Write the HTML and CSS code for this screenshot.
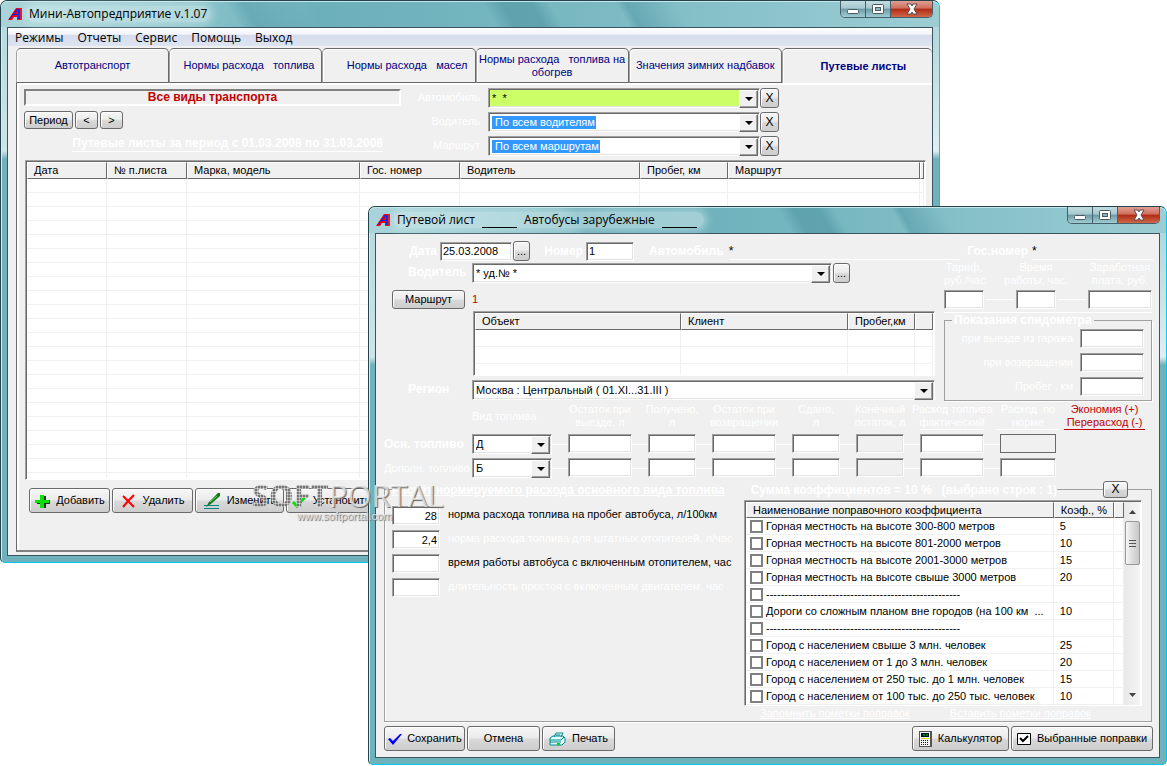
FILE: index.html
```html
<!DOCTYPE html>
<html lang="ru">
<head>
  <meta charset="UTF-8" />
  <meta name="viewport" content="width=device-width, initial-scale=1.0"/>
  <title>Мини-Автопредприятие v.1.07</title>
  <link rel="stylesheet" href="styles.css">
</head>
<body>
  <div class="desktop">

    <section class="window window-main">
      <header class="titlebar">
        <svg class="app-icon" viewBox="0 0 14 12" width="14" height="12"><path d="M0 12 8 0h6v12H9V9H6l-2 3z" fill="#f00010"/><path d="M1 11 9 1h3v10h-2V7H5l-3 4zM6 6h4V2z" fill="#0a20e8"/></svg>
        <h1>Мини-Автопредприятие v.1.07</h1>
        <div class="controls">
          <button class="ctl" aria-label="Свернуть"><svg viewBox="0 0 14 12" width="14" height="12"><rect x="1.500" y="6.500" width="11" height="4" rx="1" fill="#fff" stroke="#4d5a62"/></svg></button>
          <button class="ctl" aria-label="Развернуть"><svg viewBox="0 0 14 12" width="14" height="12"><rect x="1.500" y="1.500" width="11" height="9" rx="1" fill="#fff" stroke="#4d5a62"/><rect x="4.500" y="4.500" width="5" height="3" fill="#8fb6c0" stroke="#4d5a62"/></svg></button>
          <button class="ctl ctl-close" aria-label="Закрыть"><svg viewBox="0 0 14 12" width="14" height="12"><path d="M2 1h4l1 2 1-2h4L9 6l3 5H8L7 9l-1 2H2l3-5z" fill="#fff" stroke="#5a4a50"/></svg></button>
        </div>
      </header>

      <div class="client">
        <nav class="menu">
          <a href="#">Режимы</a>
          <a href="#">Отчеты</a>
          <a href="#">Сервис</a>
          <a href="#">Помощь</a>
          <a href="#">Выход</a>
        </nav>

        <div class="tabs">
          <button class="tab">Автотранспорт</button>
          <button class="tab tab-right">Нормы расхода &nbsp; топлива</button>
          <button class="tab tab-right">Нормы расхода &nbsp; масел</button>
          <button class="tab tab-tight">Нормы расхода &nbsp; топлива на<br>обогрев</button>
          <button class="tab">Значения зимних надбавок</button>
          <button class="tab tab-active">Путевые листы</button>
        </div>

        <div class="page">
          <div class="top">
            <div class="period">
              <div class="kind">Все виды транспорта</div>
              <div class="period-buttons">
                <button class="btn btn-period">Период</button>
                <button class="btn btn-step">&lt;</button>
                <button class="btn btn-step">&gt;</button>
              </div>
              <h2>Путевые листы за период с 01.03.2008 по 31.03.2008</h2>
            </div>
            <div class="filters">
              <label for="f-car">Автомобиль</label>
              <span class="combo combo-green"><select id="f-car"><option>* &nbsp;*</option></select></span>
              <button class="btn btn-x">X</button>
              <label for="f-driver">Водитель</label>
              <span class="combo combo-marked"><select id="f-driver"><option>&nbsp;По всем водителям</option></select></span>
              <button class="btn btn-x">X</button>
              <label for="f-route">Маршрут</label>
              <span class="combo combo-marked"><select id="f-route"><option>&nbsp;По всем маршрутам</option></select></span>
              <button class="btn btn-x">X</button>
            </div>
          </div>

          <div class="grid-box">
            <table class="list list-main">
              <colgroup><col class="c80"><col class="c80"><col class="c173"><col class="c100"><col class="c180"><col class="c88"><col><col class="c4"></colgroup>
              <thead>
                <tr><th>Дата</th><th>№ п.листа</th><th>Марка, модель</th><th>Гос. номер</th><th>Водитель</th><th>Пробег, км</th><th>Маршрут</th><th></th></tr>
              </thead>
              <tbody>
                <tr><td></td><td></td><td></td><td></td><td></td><td></td><td></td><td></td></tr>
              </tbody>
            </table>
          </div>

          <div class="actions">
            <button class="btn btn-big"><svg viewBox="0 0 16 16" width="16" height="16"><path d="M7 3h5v4h4v4h-4v4H7v-4H3V7h4z" fill="#1c3c1c"/><path d="M6 2h4v5h5v3h-5v5H6v-5H1V7h5z" fill="#0be00b"/></svg>Добавить</button>
            <button class="btn btn-big"><svg viewBox="0 0 16 16" width="16" height="16"><path d="M2 3l11 11M13 2 8 7l-6 7" fill="none" stroke="#f00" stroke-width="2"/></svg>Удалить</button>
            <button class="btn btn-big btn-edit"><svg viewBox="0 0 18 16" width="18" height="16"><path d="M1 12.500h15M1 15.500h15" stroke="#088"/><path d="M3 14l3-5 9-9h2v3l-8 7-4 3z" fill="#0a7a14"/><path d="M7 9l7-6" stroke="#8c8" fill="none"/></svg>Изменить</button>
            <button class="btn btn-big btn-edit"><svg viewBox="0 0 16 16" width="16" height="16"><path d="M2 9l4 4 8-9" fill="none" stroke="#0be00b" stroke-width="3"/></svg>Установить</button>
          </div>
        </div>
      </div>
    </section>

    <section class="window window-sheet">
      <header class="titlebar">
        <svg class="app-icon" viewBox="0 0 14 12" width="14" height="12"><path d="M0 12 8 0h6v12H9V9H6l-2 3z" fill="#f00010"/><path d="M1 11 9 1h3v10h-2V7H5l-3 4zM6 6h4V2z" fill="#0a20e8"/></svg>
        <h1>Путевой лист <span class="blank"></span> Автобусы зарубежные <span class="blank"></span></h1>
        <div class="controls">
          <button class="ctl" aria-label="Свернуть"><svg viewBox="0 0 14 12" width="14" height="12"><rect x="1.500" y="6.500" width="11" height="4" rx="1" fill="#fff" stroke="#4d5a62"/></svg></button>
          <button class="ctl" aria-label="Развернуть"><svg viewBox="0 0 14 12" width="14" height="12"><rect x="1.500" y="1.500" width="11" height="9" rx="1" fill="#fff" stroke="#4d5a62"/><rect x="4.500" y="4.500" width="5" height="3" fill="#8fb6c0" stroke="#4d5a62"/></svg></button>
          <button class="ctl ctl-close" aria-label="Закрыть"><svg viewBox="0 0 14 12" width="14" height="12"><path d="M2 1h4l1 2 1-2h4L9 6l3 5H8L7 9l-1 2H2l3-5z" fill="#fff" stroke="#5a4a50"/></svg></button>
        </div>
      </header>

      <div class="client sheet">
        <div class="line line-head">
          <label class="bold side" for="date">Дата</label>
          <input class="field w-date" id="date" type="text" value="25.03.2008">
          <button class="btn btn-dots">...</button>
          <label class="bold side-num" for="num">Номер</label>
          <input class="field w-48" id="num" type="text" value="1">
          <span class="bold car-label">Автомобиль</span>
          <span class="under">*</span>
          <span class="bold">Гос.номер</span>
          <span class="under under-short">*</span>
        </div>

        <div class="upper">
          <div class="upper-left">
            <label class="bold" for="driver">Водитель</label>
            <div class="line">
              <span class="combo combo-driver"><select id="driver"><option>* уд.№ *</option></select></span>
              <button class="btn btn-dots">...</button>
            </div>
            <button class="btn btn-route">Маршрут</button>
            <span class="route-no">1</span>
            <div class="grid-box route-box">
              <table class="list list-route">
                <colgroup><col><col class="c167"><col class="c67"><col class="c18"></colgroup>
                <thead>
                  <tr><th>Объект</th><th>Клиент</th><th>Пробег,км</th><th></th></tr>
                </thead>
                <tbody>
                  <tr><td></td><td></td><td></td><td></td></tr>
                </tbody>
              </table>
            </div>
            <label class="bold" for="region">Регион</label>
            <span class="combo"><select id="region"><option>Москва : Центральный ( 01.XI...31.III )</option></select></span>
          </div>

          <div class="upper-right">
            <div class="pay">
              <label for="rate">Тариф,<br>руб./час</label>
              <label for="hours">Время<br>работы, час.</label>
              <label for="salary">Заработная<br>плата, руб.</label>
            </div>
            <div class="pay-fields">
              <input class="field w-40" id="rate" type="text"><i class="dash"></i>
              <input class="field w-40" id="hours" type="text"><i class="dash"></i>
              <input class="field w-64" id="salary" type="text">
            </div>
            <fieldset class="odometer">
              <legend>Показания спидометра</legend>
              <label for="odo-out">при выезде из гаража</label><input class="field" id="odo-out" type="text">
              <label for="odo-in">при возвращении</label><input class="field" id="odo-in" type="text">
              <label for="odo-run">Пробег , км</label><input class="field" id="odo-run" type="text">
            </fieldset>
          </div>
        </div>

        <div class="fuel fuel-head">
          <span></span>
          <span class="fuel-kind">Вид топлива</span>
          <span>Остаток при<br>выезде, л</span>
          <span>Получено,<br>л</span>
          <span>Остаток при<br>возвращении</span>
          <span>Сдано,<br>л</span>
          <span>Конечный<br>остаток, л</span>
          <span class="ruled">Расход топлива<br>фактический</span>
          <span class="ruled">Расход &nbsp;по<br>норме</span>
          <span class="economy">Экономия (+)<br>Перерасход (-)</span>
        </div>
        <div class="fuel fuel-row">
          <label class="bold" for="fuel1">Осн. топливо</label>
          <span class="combo"><select id="fuel1"><option>Д</option></select></span>
          <input class="field" type="text" aria-label="Остаток при выезде">
          <input class="field" type="text" aria-label="Получено">
          <input class="field" type="text" aria-label="Остаток при возвращении">
          <input class="field" type="text" aria-label="Сдано">
          <input class="field field-off" type="text" aria-label="Конечный остаток">
          <input class="field" type="text" aria-label="Расход фактический">
          <input class="field field-norm" type="text" aria-label="Расход по норме">
        </div>
        <div class="fuel fuel-row">
          <label for="fuel2">Дополн. топливо</label>
          <span class="combo"><select id="fuel2"><option>Б</option></select></span>
          <input class="field" type="text" aria-label="Остаток при выезде">
          <input class="field" type="text" aria-label="Получено">
          <input class="field" type="text" aria-label="Остаток при возвращении">
          <input class="field" type="text" aria-label="Сдано">
          <input class="field field-off" type="text" aria-label="Конечный остаток">
          <input class="field" type="text" aria-label="Расход фактический">
          <input class="field" type="text" aria-label="Расход по норме">
        </div>

        <div class="calc-head">
          <i class="rule rule-start"></i>
          <h3 class="calc-title">Расчёт нормируемого расхода основного вида топлива</h3>
          <h3 class="calc-sum">Сумма коэффициентов = 10 % &nbsp; (выбрано строк : 1)</h3>
          <i class="rule"></i>
          <button class="btn btn-reset">X</button>
          <i class="rule rule-end"></i>
        </div>
        <div class="calc">
          <div class="norms">
            <input class="field" id="n1" type="text" value="28"><label class="dark" for="n1">норма расхода топлива на пробег автобуса, л/100км</label>
            <input class="field" id="n2" type="text" value="2,4"><label for="n2">норма расхода топлива для штатных отопителей, л/час</label>
            <input class="field" id="n3" type="text"><label class="dark" for="n3">время работы автобуса с включенным отопителем, час</label>
            <input class="field" id="n4" type="text"><label for="n4">длительность простоя с включенным двигателем, час</label>
          </div>

          <div class="factors">
            <div class="grid-box factor-box">
              <table class="list list-factors">
                <colgroup><col><col class="c60"><col class="c10"></colgroup>
                <thead>
                  <tr><th>Наименование поправочного коэффициента</th><th>Коэф., %</th><th></th></tr>
                </thead>
                <tbody>
                  <tr><td><label><input type="checkbox">Горная местность на высоте 300-800 метров</label></td><td>5</td><td></td></tr>
                  <tr><td><label><input type="checkbox">Горная местность на высоте 801-2000 метров</label></td><td>10</td><td></td></tr>
                  <tr><td><label><input type="checkbox">Горная местность на высоте 2001-3000 метров</label></td><td>15</td><td></td></tr>
                  <tr><td><label><input type="checkbox">Горная местность на высоте свыше 3000 метров</label></td><td>20</td><td></td></tr>
                  <tr><td><label><input type="checkbox">-----------------------------------------------------</label></td><td></td><td></td></tr>
                  <tr><td><label><input type="checkbox">Дороги со сложным планом вне городов (на 100 км &nbsp;...</label></td><td>10</td><td></td></tr>
                  <tr><td><label><input type="checkbox">-----------------------------------------------------</label></td><td></td><td></td></tr>
                  <tr><td><label><input type="checkbox">Город с населением свыше 3 млн. человек</label></td><td>25</td><td></td></tr>
                  <tr><td><label><input type="checkbox">Город с населением от 1 до 3 млн. человек</label></td><td>20</td><td></td></tr>
                  <tr><td><label><input type="checkbox">Город с населением от 250 тыс. до 1 млн. человек</label></td><td>15</td><td></td></tr>
                  <tr><td><label><input type="checkbox">Город с населением от 100 тыс. до 250 тыс. человек</label></td><td>10</td><td></td></tr>
                </tbody>
              </table>
              <div class="scroll">
                <svg viewBox="0 0 7 4" width="7" height="4"><path d="M0 4 3.500 0 7 4z" fill="#444"/></svg>
                <div class="thumb"><i></i><i></i><i></i></div>
                <svg viewBox="0 0 7 4" width="7" height="4"><path d="M0 0h7L3.500 4z" fill="#444"/></svg>
              </div>
            </div>
            <div class="factor-links">
              <a href="#">Запомнить пометки поправок</a>
              <a href="#">Вставить пометки поправок</a>
            </div>
          </div>
        </div>

        <footer class="sheet-actions">
          <button class="btn btn-big btn-save"><svg viewBox="0 0 16 16" width="16" height="16"><path d="M1 8l2-1 3 3 7-7h2L6 14z" fill="#00f"/></svg>Сохранить</button>
          <button class="btn btn-mid">Отмена</button>
          <button class="btn btn-mid"><svg viewBox="0 0 17 14" width="17" height="14"><path d="M5 5l2-4h7l-2 4M1 6l3-2h10l2 2v4l-3 3H1z" fill="#dff" stroke="#088"/><path d="M1 8h11l3-3M1 10h11M7 3h4" fill="none" stroke="#088"/><path d="M8 12h3" stroke="#0d0" stroke-width="2"/></svg>Печать</button>
          <span class="spacer"></span>
          <button class="btn btn-calc"><svg viewBox="0 0 13 16" width="13" height="16"><path d="M0 0h13v16H0z" fill="#555"/><path d="M1 1h10v14H1z" fill="#f4f4f4"/><path d="M2 2h8v4H2z" fill="#012"/><path d="M4 4h2M7 4h2" stroke="#0e0"/><path d="M2 7.500h8" stroke="#dd0"/><path d="M2 9.500h8M2 11.500h8M2 13.500h8" stroke="#00c" stroke-dasharray="1 1"/></svg>Калькулятор</button>
          <button class="btn btn-chosen"><svg viewBox="0 0 14 12" width="14" height="12"><path d="M.5.5h13v11H.5z" fill="#fff" stroke="#000"/><path d="M3 5l3 3 5-5" fill="none" stroke="#000" stroke-width="2"/></svg>Выбранные поправки</button>
        </footer>
      </div>
    </section>

    <div class="watermark">
      <div class="brand"><span class="brand-dots">SOFT</span>PORTAL</div>
      <div class="site">www.softportal.com</div>
    </div>
  </div>
</body>
</html>
```

FILE: styles.css
```css
* {
  box-sizing: border-box;
}

body {
  margin: 0;
  background: #fff;
  color: #000;
  font: 11px/13px "Liberation Sans", Arial, sans-serif;
}

button, input, select {
  font: inherit;
  color: inherit;
  margin: 0;
}

h1, h2, h3 {
  margin: 0;
  font-size: 12px;
}

.desktop {
  position: relative;
  min-height: 100vh;
  overflow: hidden;
}

/* windows */

.window {
  position: absolute;
  padding: 0 6px 6px;
  border: 1px solid #23424c;
  border-right-color: #00c8f0;
  border-bottom-color: #00c8f0;
  border-radius: 7px 7px 5px 5px;
  background:
    linear-gradient(#b4d8dd, #cde4e8 150px, #70b2bc 158px) left / 6px 100% no-repeat,
    linear-gradient(#a8d2d8, #e0eef2 150px, #70b2bc 158px) right / 6px 100% no-repeat,
    #70b2bc;
  box-shadow: inset 1px 1px #d5ecef;
}

.window-main {
  left: 0;
  top: 0;
  right: 227px;
}

.window-sheet {
  left: 368px;
  top: 206px;
  right: 0;
}

.titlebar {
  display: flex;
  align-items: center;
  height: 26px;
  margin: 0 -6px;
  padding: 0 6px 0 7px;
  border-radius: 6px 6px 0 0;
  background:
    linear-gradient(60deg, transparent 25%, rgba(85, 155, 168, 0.5) 27%, transparent 33%, transparent 52%, rgba(80, 150, 163, 0.6) 54%, rgba(80, 150, 163, 0.6) 57%, transparent 59%, transparent 66%, rgba(85, 155, 168, 0.6) 67%, transparent 72%),
    linear-gradient(90deg, #aad4d9, #8fc6cd 18%, #6cb0bb 34%, #78b8c1 60%, #9ccdd3);
  box-shadow: inset 0 1px #c9e6ea;
}

.titlebar h1 {
  margin-left: 4px;
  padding: 0 3px;
  font: 12px/16px "Open Sans", sans-serif;
  border-radius: 8px;
  background: rgba(225, 242, 245, 0.45);
  box-shadow: 0 0 8px 3px rgba(225, 242, 245, 0.45);
}

.blank {
  display: inline-block;
  width: 35px;
  height: 13px;
  margin: 0 4px;
  vertical-align: bottom;
  border-bottom: 1px solid #000;
}

.controls {
  display: flex;
  align-self: flex-start;
  margin-left: auto;
  border: 1px solid #45606a;
  border-top: 0;
  border-radius: 0 0 5px 5px;
  overflow: hidden;
}

.ctl {
  display: flex;
  align-items: center;
  justify-content: center;
  width: 25px;
  height: 16px;
  padding: 0;
  border: 0;
  border-right: 1px solid #45606a;
  background: linear-gradient(#c3dde1, #a5c8ce 45%, #6d9aa5 50%, #9fcdd3);
}

.ctl-close {
  width: 41px;
  border-right: 0;
  background: linear-gradient(#dfa093, #cf6e5c 45%, #b02a14 50%, #cf6848);
}

.client {
  border: 1px solid #3a5560;
  background: #f0f0f0;
}

/* main window */

.menu {
  display: flex;
  gap: 14px;
  height: 19px;
  padding: 1px 7px 0;
  border-bottom: 1px solid #f0f0f0;
  background: linear-gradient(#fff, #f1f3f9 35%, #d6dcec 40%, #dde4f1);
}

.menu a {
  color: #000;
  font: 12px/18px "Open Sans", sans-serif;
  text-decoration: none;
}

.tabs {
  display: grid;
  grid-template-columns: repeat(5, 153fr) 150fr;
  height: 36px;
  margin-left: 8px;
  padding-top: 1px;
}

.tab {
  padding: 0 4px;
  border: 1px solid #696969;
  border-left-color: #a0a0a0;
  border-radius: 5px 5px 0 0;
  background: #f0f0f0;
  box-shadow: inset 1px 1px #fff;
  color: #000080;
  text-align: center;
  white-space: nowrap;
}

.tab-right {
  padding-right: 7px;
  text-align: right;
}

.tab-tight {
  padding: 0;
}

.tab-active {
  padding-left: 16px;
  border-right: 0;
  border-bottom: 0;
  font-weight: bold;
}

.page {
  margin: 0 0 3px 8px;
  padding: 4px 6px 37px 7px;
  border-left: 1px solid #696969;
  border-bottom: 2px solid #808080;
  box-shadow: inset 2px 2px #fff;
}

.top {
  display: flex;
  gap: 7px;
  padding-top: 1px;
}

.period {
  width: 377px;
}

.kind {
  margin: 1px 0 5px;
  border: 2px solid;
  border-color: #808080 #fff #fff #808080;
  color: #c00000;
  font-weight: bold;
  font-size: 12px;
  text-align: center;
}

.period-buttons {
  display: flex;
  gap: 2px;
}

.period h2 {
  width: fit-content;
  margin: 6px 18px 0 auto;
  border-bottom: 1px solid #fff;
  color: #fff;
  line-height: 16px;
}

.filters {
  display: grid;
  grid-template-columns: 80px 272px 19px;
  gap: 4px 0;
}

.filters label {
  padding: 3px 8px 0 0;
  color: #fff;
  text-align: right;
}

.btn {
  display: flex;
  align-items: center;
  justify-content: center;
  gap: 6px;
  padding: 0;
  border: 1px solid #6a6a6a;
  border-radius: 3px;
  background: linear-gradient(#f6f6f6, #ececec 45%, #d8d8d8 55%, #cdcdcd);
  box-shadow: inset 1px 1px #fff;
  white-space: nowrap;
}

.btn-period {
  width: 49px;
  height: 18px;
}

.btn-step {
  width: 23px;
  height: 18px;
}

.btn-x {
  font-size: 12px;
}

.combo {
  display: flex;
  align-items: center;
  height: 20px;
  padding: 2px 20px 2px 3px;
  position: relative;
  border: 1px solid;
  border-color: #a0a0a0 #fff #fff #a0a0a0;
  background: #fff;
  box-shadow: inset 1px 1px #696969, inset -1px -1px #e3e3e3;
}

.combo select {
  flex: 1;
  min-width: 0;
  padding: 0;
  border: 0;
  appearance: none;
  background: transparent;
}

.combo::before {
  content: "";
  position: absolute;
  top: 1px;
  right: 1px;
  width: 17px;
  height: 16px;
  border: 1px solid;
  border-color: #fff #696969 #696969 #fff;
  background: #f0f0f0;
  box-shadow: inset -1px -1px #a0a0a0;
}

.combo::after {
  content: "";
  position: absolute;
  top: 8px;
  right: 6px;
  border: 4px solid transparent;
  border-top-color: #000;
  border-bottom: 0;
}

.combo-green {
  background: #ccff66;
}

.combo-marked select {
  flex: none;
  padding-right: 1px;
  background: #3399ff;
  color: #fff;
}

.combo-driver {
  width: 360px;
}

/* lists */

.grid-box {
  margin: 4px 0 0 1px;
  padding: 1px;
  border: 1px solid;
  border-color: #a0a0a0 #fff #fff #a0a0a0;
  background: #fff;
  box-shadow: inset 1px 1px #696969;
}

.list {
  width: 100%;
  border-collapse: separate;
  border-spacing: 0;
  table-layout: fixed;
}

.list th {
  height: 17px;
  padding: 0 6px;
  border: 1px solid;
  border-color: #fff #696969 #696969 #fff;
  background: #f0f0f0;
  font-weight: normal;
  text-align: left;
  white-space: nowrap;
}

.list td {
  padding: 0 6px;
  border-right: 1px solid #f0f0f0;
}

.list-main td {
  height: 299px;
  background: repeating-linear-gradient(#fff 0 13px, #f0f0f0 13px 14px);
}

.list-route td {
  height: 44px;
  background: repeating-linear-gradient(#fff 0 16px, #f0f0f0 16px 17px);
}

.c4 { width: 4px; }
.c10 { width: 10px; }
.c18 { width: 18px; }
.c60 { width: 60px; }
.c67 { width: 67px; }
.c80 { width: 80px; }
.c88 { width: 88px; }
.c100 { width: 100px; }
.c167 { width: 167px; }
.c173 { width: 173px; }
.c180 { width: 180px; }

.list th:last-child, .list td:last-child {
  padding: 0;
}

.actions {
  display: flex;
  gap: 2px;
  padding: 8px 0 0 5px;
}

.btn-big {
  width: 81px;
  height: 25px;
}

.btn-edit {
  width: 89px;
}

.btn-save {
  gap: 4px;
}

/* waybill window */

.sheet {
  padding: 7px 6px 6px 8px;
}

.sheet label, .bold {
  color: #fff;
}

.bold {
  font-weight: bold;
  font-size: 12px;
}

.line {
  display: flex;
  gap: 1px;
}

.field {
  height: 19px;
  min-width: 0;
  padding: 0 2px;
  border: 1px solid;
  border-color: #a0a0a0 #fff #fff #a0a0a0;
  border-radius: 0;
  background: #fff;
  box-shadow: inset 1px 1px #696969, inset -1px -1px #e3e3e3;
}

.w-40 { width: 40px; }
.w-48 { width: 48px; }
.w-64 { width: 64px; }
.w-date { width: 72px; }

.line-head {
  height: 20px;
  align-items: center;
}

.side {
  width: 55px;
  padding-right: 2px;
  text-align: right;
}

.side-num {
  width: 54px;
  padding-right: 2px;
  text-align: right;
}

.car-label {
  margin: 0 4px 0 14px;
}

.under {
  flex: 1;
  margin-right: 6px;
  border-bottom: 1px solid #fff;
  line-height: 16px;
  font-size: 12px;
}

.under-short {
  flex: none;
  width: 121px;
  margin: 0 0 0 3px;
}

.btn-dots {
  width: 17px;
  height: 20px;
}

.upper {
  display: flex;
  gap: 9px;
}

.upper-left {
  flex: 1;
  display: grid;
  grid-template-columns: 80px 1fr;
  gap: 2px 8px;
  align-content: start;
  padding-top: 2px;
}

.upper-left label {
  padding: 3px 0 0 24px;
}

.btn-route {
  width: 73px;
  height: 19px;
  margin: 5px 0 0 8px;
}

.route-no {
  padding-top: 8px;
  color: #c00000;
}

.route-box {
  grid-column: 2;
  margin: 0 0 2px 1px;
}

.upper-right {
  width: 208px;
  margin-right: 1px;
}

.pay {
  display: grid;
  grid-template-columns: 40px 104px 64px;
  justify-content: space-between;
  height: 29px;
  text-align: center;
  white-space: nowrap;
}

.pay-fields {
  display: flex;
  align-items: center;
  padding-bottom: 3px;
  border-bottom: 1px solid #fff;
}

.dash {
  flex: 1;
  height: 1px;
  margin: 0 2px;
  background: #fff;
}

.odometer {
  display: grid;
  grid-template-columns: 1fr 64px;
  gap: 5px 7px;
  margin: 1px 0 0;
  padding: 2px 7px 4px;
  border: 1px solid #a0a0a0;
  box-shadow: 1px 1px #fff;
  text-align: right;
}

.odometer legend {
  margin-left: 0;
  margin-right: auto;
  padding: 0 2px;
  color: #fff;
  font-weight: bold;
  font-size: 12px;
}

.odometer label {
  align-self: center;
}

.fuel {
  display: grid;
  grid-template-columns: 72px 80px 64px 48px 64px 48px 48px 64px 56px 80px;
  column-gap: 16px;
}

.fuel-head {
  align-items: start;
  height: 33px;
  padding-top: 2px;
  color: #fff;
  text-align: center;
  white-space: nowrap;
}

.fuel-head span {
  margin: 0 -8px;
}

.fuel-head .fuel-kind {
  margin: 7px 0 0;
  text-align: left;
}

.fuel-head .ruled {
  padding-bottom: 1px;
  background: linear-gradient(#fff, #fff) bottom / 64px 1px no-repeat;
}

.fuel-head .economy {
  margin: 0 7px 0 -8px;
  border-bottom: 1px solid #c00000;
  color: #c00000;
}

.fuel-row {
  height: 20px;
  margin-bottom: 4px;
  background: linear-gradient(#fff, #fff) 100px 10px / 568px 1px no-repeat;
}

.fuel-row label {
  padding-top: 4px;
  white-space: nowrap;
}

.field-off {
  background: #f0f0f0;
}

.field-norm {
  border-color: #696969;
  background: #f0f0f0;
  box-shadow: none;
}

.calc-head {
  display: flex;
  align-items: center;
  height: 17px;
  margin: -1px 1px 0 0;
}

.calc-head h3 {
  color: #fff;
  line-height: 14px;
}

.calc-title {
  text-decoration: underline;
}

.calc-sum {
  margin-left: 26px;
}

.rule {
  flex: 1;
  height: 1px;
  background: #a0a0a0;
}

.rule-start {
  flex: none;
  width: 8px;
}

.rule-end {
  flex: none;
  width: 24px;
}

.btn-reset {
  width: 25px;
  height: 17px;
  font-size: 12px;
}

.calc {
  display: flex;
  justify-content: space-between;
  margin: -8px 1px 4px 0;
  padding: 10px 9px 0 7px;
  border: 1px solid #a0a0a0;
  border-top: 0;
  box-shadow: inset 1px 0 #fff, 0 1px #fff;
}

.norms {
  display: grid;
  grid-template-columns: 48px auto;
  gap: 5px 8px;
  align-content: start;
  padding-top: 6px;
}

.norms .field {
  text-align: right;
}

.norms label {
  padding-top: 2px;
}

.sheet .dark {
  color: #000;
}

.factors {
  width: 398px;
}

.factor-box {
  display: flex;
  margin: 0;
  padding-bottom: 0;
}

.list-factors {
  flex: 1;
  width: auto;
}

.list-factors th {
  height: 16px;
}

.list-factors td {
  height: 17px;
  border-bottom: 1px solid #f0f0f0;
  white-space: nowrap;
}

.list-factors td:first-child {
  padding: 0 0 0 4px;
}

.list-factors label {
  display: flex;
  align-items: center;
  gap: 3px;
  color: #000;
}

.list-factors input {
  width: 13px;
  height: 13px;
  border: 2px solid #808080;
  appearance: none;
  background: #fff;
}

.scroll {
  display: flex;
  flex-direction: column;
  align-items: center;
  width: 16px;
  padding: 8px 0;
  background: linear-gradient(90deg, #e8e8e8, #f4f4f4);
}

.scroll svg:last-child {
  margin-top: auto;
}

.thumb {
  display: flex;
  flex-direction: column;
  align-items: center;
  justify-content: center;
  gap: 2px;
  width: 15px;
  height: 44px;
  margin-top: 7px;
  border: 1px solid #999;
  border-radius: 2px;
  background: linear-gradient(90deg, #f6f6f6, #dcdcdc 50%, #c8c8c8);
}

.thumb i {
  width: 7px;
  height: 1px;
  background: #555;
}

.factor-links {
  display: flex;
  gap: 40px;
  padding: 1px 0 1px 16px;
}

.factor-links a {
  color: #fff;
}

.sheet-actions {
  display: flex;
  gap: 2px;
}

.sheet-actions .btn {
  height: 25px;
}

.btn-mid {
  width: 73px;
}

.btn-calc {
  width: 97px;
}

.btn-chosen {
  width: 142px;
}

.spacer {
  flex: 1;
}

/* site mark lying over both windows */

.watermark {
  position: absolute;
  left: 252px;
  top: 480px;
  color: rgba(255, 255, 255, 0.7);
  text-shadow: 1px 1px 1px #666;
}

.brand {
  font: 31px/30px "Open Sans", sans-serif;
}

.brand-dots {
  background: radial-gradient(circle at 1px 1px, #777 1px, #ddd 2px) 0 0 / 3px 3px;
  background-clip: text;
  color: transparent;
  font-weight: bold;
  text-shadow: none;
}

.site {
  padding-left: 45px;
  color: #ddd;
}
```
